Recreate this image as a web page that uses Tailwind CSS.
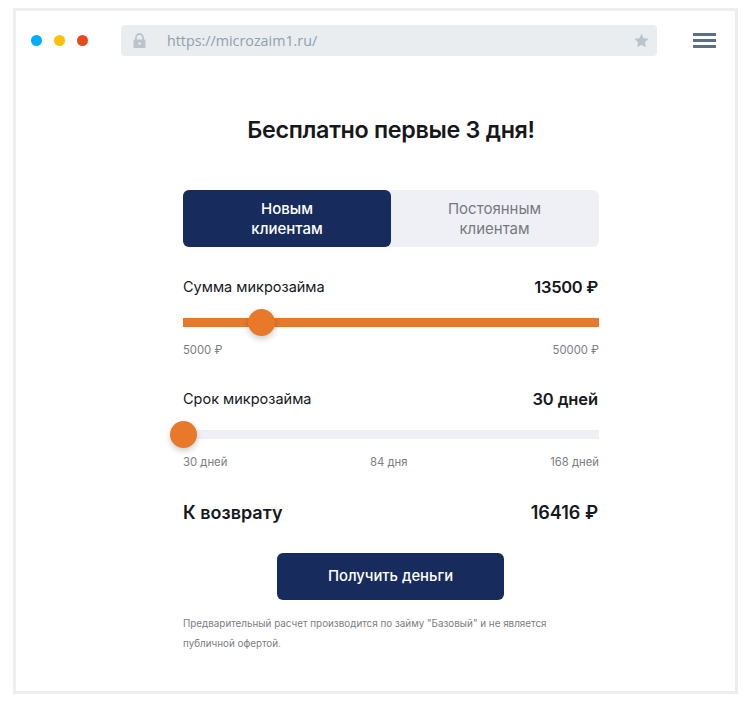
<!DOCTYPE html>
<html lang="ru">
<head>
    <meta charset="UTF-8">
    <title>Микрозайм</title>
    <script src="https://cdn.jsdelivr.net/npm/@tailwindcss/browser@4"></script>
</head>
<body class="bg-white font-['Inter',sans-serif]">
    <div class="pt-2 pl-[13px] w-[751px] h-[709px]">
        <div class="w-[725px] h-[686px] border-[3px] border-[#eceef0] bg-white">
            <!-- Browser bar -->
            <div class="flex items-center h-[31px] mt-[14px] pl-[15px]">
                <div class="flex gap-3">
                    <span class="w-[11px] h-[11px] rounded-full bg-[#00aeff]"></span>
                    <span class="w-[11px] h-[11px] rounded-full bg-[#ffc107]"></span>
                    <span class="w-[11px] h-[11px] rounded-full bg-[#e64a19]"></span>
                </div>
                <div class="flex items-center ml-[33px] w-[536px] h-[31px] rounded bg-[#e9edf0] pl-3 pr-[8px]">
                    <svg width="13" height="15" viewBox="0 0 13 15" class="shrink-0">
                        <path d="M3 7V4.5a3.5 3.5 0 0 1 7 0V7" fill="none" stroke="#b9c4cd" stroke-width="1.8"/>
                        <rect x="0.5" y="6.5" width="12" height="8.5" rx="1" fill="#b9c4cd"/>
                        <circle cx="6.5" cy="10.5" r="1.2" fill="#e9edf0"/>
                    </svg>
                    <span class="ml-[21px] text-[14.3px] text-[#8fa0ad] font-['Open_Sans',sans-serif]">https://microzaim1.ru/</span>
                    <svg width="15" height="15" viewBox="0 0 24 24" class="ml-auto">
                        <path d="M12 1l3.4 7.3 7.9 1-5.8 5.5 1.5 7.9L12 18.8l-7 3.9 1.5-7.9L.7 9.3l7.9-1z" fill="#b9c4cd"/>
                    </svg>
                </div>
                <div class="flex flex-col gap-[3px] ml-9 w-[23px]">
                    <span class="h-[3px] bg-[#5b7083]"></span>
                    <span class="h-[3px] bg-[#5b7083]"></span>
                    <span class="h-[3px] bg-[#5b7083]"></span>
                </div>
            </div>

            <!-- Calculator -->
            <div class="ml-[167px] w-[416px]">
                <h1 class="mt-[58px] text-center text-[23.3px] leading-[32px] font-semibold tracking-[-0.3px] text-[#16181d]">Бесплатно первые 3 дня!</h1>

                <div class="flex mt-[44px] h-[57px] rounded-md bg-[#eff0f5] text-[15px] leading-[20px] text-center">
                    <div class="flex items-center justify-center w-[208px] rounded-md bg-[#172b5c] text-white font-medium">Новым<br>клиентам</div>
                    <div class="flex items-center justify-center flex-1 text-[#77787d] pr-[1px]">Постоянным<br>клиентам</div>
                </div>

                <div class="flex justify-between items-center mt-[29px] h-[22px] text-[#16181d]">
                    <span class="text-[14.5px]">Сумма микрозайма</span>
                    <span class="text-[16.5px] font-semibold tracking-[-0.3px] pr-[1px]">13500 ₽</span>
                </div>
                <div class="relative mt-[20px] h-[9px] bg-[#e8792b]">
                    <span class="absolute left-[65px] top-[-9px] w-[27px] h-[27px] rounded-full bg-[#e8792b] shadow-[0_3px_6px_rgba(0,0,0,0.2)]"></span>
                </div>
                <div class="flex justify-between mt-[15px] text-[11.3px] leading-[16px] text-[#7c7d82]">
                    <span>5000 ₽</span>
                    <span>50000 ₽</span>
                </div>

                <div class="flex justify-between items-center mt-[30px] h-[22px] text-[#16181d]">
                    <span class="text-[14.5px]">Срок микрозайма</span>
                    <span class="text-[16.5px] font-semibold tracking-[-0.1px] pr-[1px]">30 дней</span>
                </div>
                <div class="relative mt-[20px] h-[9px] bg-[#eff0f5]">
                    <span class="absolute left-[-13px] top-[-9px] w-[27px] h-[27px] rounded-full bg-[#e8792b] shadow-[0_3px_6px_rgba(0,0,0,0.2)]"></span>
                </div>
                <div class="flex justify-between mt-[15px] text-[11.3px] leading-[16px] text-[#7c7d82]">
                    <span>30 дней</span>
                    <span>84 дня</span>
                    <span>168 дней</span>
                </div>

                <div class="flex justify-between items-center mt-[29px] h-[26px] text-[18px] font-semibold text-[#16181d]">
                    <span>К возврату</span>
                    <span class="pr-[1px]">16416 ₽</span>
                </div>

                <button class="block mt-[28px] ml-[94px] w-[227px] h-[47px] rounded-md bg-[#172b5c] text-white text-[14.8px] font-medium">Получить деньги</button>

                <p class="mt-[13px] w-[380px] text-[9.85px] leading-[20px] text-[#7c7d82]">Предварительный расчет производится по займу "Базовый" и не является публичной офертой.</p>
            </div>
        </div>
    </div>
</body>
</html>
